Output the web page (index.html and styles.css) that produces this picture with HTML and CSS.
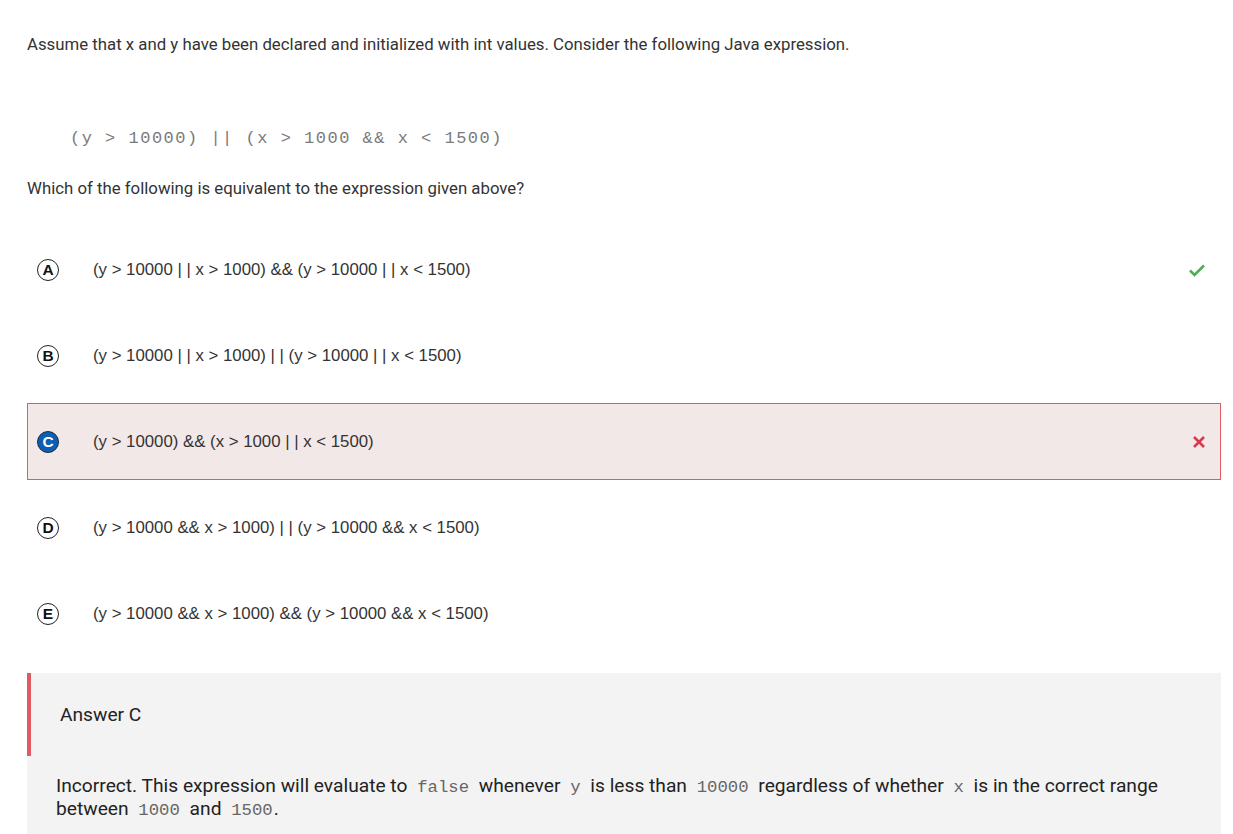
FILE: index.html
```html
<!DOCTYPE html>
<html>
<head>
<meta charset="utf-8">
<link rel="stylesheet" href="styles.css">
</head>
<body>
<div class="page">
  <p class="stem">Assume that x and y have been declared and initialized with int values. Consider the following Java expression.</p>
  <pre class="code">(y &gt; 10000) || (x &gt; 1000 &amp;&amp; x &lt; 1500)</pre>
  <p class="stem question">Which of the following is equivalent to the expression given above?</p>

  <div class="options">
    <div class="option">
      <span class="badge">A</span>
      <span class="opt-text">(y &gt; 10000 | | x &gt; 1000) &amp;&amp; (y &gt; 10000 | | x &lt; 1500)</span>
      <span class="mark">
        <svg width="18" height="14" viewBox="0 0 18 14"><path d="M2 7.5 L6.5 12 L16 2.5" fill="none" stroke="#4caf50" stroke-width="2.6"/></svg>
      </span>
    </div>
    <div class="option">
      <span class="badge">B</span>
      <span class="opt-text">(y &gt; 10000 | | x &gt; 1000) | | (y &gt; 10000 | | x &lt; 1500)</span>
    </div>
    <div class="option selected">
      <span class="badge filled">C</span>
      <span class="opt-text">(y &gt; 10000) &amp;&amp; (x &gt; 1000 | | x &lt; 1500)</span>
      <span class="mark">
        <svg width="14" height="14" viewBox="0 0 14 14"><path d="M2 2 L12 12 M12 2 L2 12" fill="none" stroke="#d9394a" stroke-width="2.6"/></svg>
      </span>
    </div>
    <div class="option">
      <span class="badge">D</span>
      <span class="opt-text">(y &gt; 10000 &amp;&amp; x &gt; 1000) | | (y &gt; 10000 &amp;&amp; x &lt; 1500)</span>
    </div>
    <div class="option">
      <span class="badge">E</span>
      <span class="opt-text">(y &gt; 10000 &amp;&amp; x &gt; 1000) &amp;&amp; (y &gt; 10000 &amp;&amp; x &lt; 1500)</span>
    </div>
  </div>

  <div class="feedback">
    <div class="answer">Answer C</div>
    <div class="explain"><span class="line">Incorrect. This expression will evaluate to <code>false</code> whenever <code>y</code> is less than <code>10000</code> regardless of whether <code>x</code> is in the correct range</span><span class="line">between <code>1000</code> and <code class="end">1500</code>.</span></div>
  </div>
</div>
</body>
</html>
```

FILE: styles.css
```css
html, body {
  margin: 0;
  padding: 0;
  background: #ffffff;
}

.page {
  padding: 32px 12px 0 27px;
  font-family: Roboto, "Liberation Sans", sans-serif;
  color: #333333;
}

.stem {
  margin: 0;
  font-size: 16.8px;
  line-height: 24px;
}

.code {
  margin: 73px 0 0 43px;
  font-family: "Liberation Mono", "Courier New", monospace;
  font-size: 17px;
  letter-spacing: 1.5px;
  line-height: 20px;
  color: #7a7a7a;
}

.question {
  margin-top: 27px;
}

.options {
  margin-top: 31px;
  display: flex;
  flex-direction: column;
  gap: 9px;
}

.option {
  height: 77px;
  box-sizing: border-box;
  display: flex;
  align-items: center;
  padding: 0 14px 0 8px;
  border: 1px solid transparent;
  font-family: "Liberation Sans", Arial, sans-serif;
  font-size: 16.8px;
  color: #333333;
}

.option.selected {
  background: #f3e8e8;
  border-color: #e05a64;
}

.badge {
  width: 22px;
  height: 22px;
  box-sizing: border-box;
  border: 1.6px solid #222;
  border-radius: 50%;
  display: flex;
  align-items: center;
  justify-content: center;
  font-weight: bold;
  font-size: 15.5px;
  color: #111;
  flex: none;
  margin-left: 1px;
}

.badge.filled {
  background: #0b5fb3;
  border-color: #1a2a44;
  color: #ffffff;
}

.opt-text {
  margin-left: 34px;
  flex: 1;
}

.mark {
  display: flex;
  align-items: center;
  margin-right: 0;
}

.feedback {
  margin-top: 21px;
  background: #f3f3f3;
  padding-bottom: 30px;
}

.answer {
  border-left: 4px solid #e05a64;
  padding: 30px 0 29px 29px;
  font-size: 19.2px;
  line-height: 24px;
  color: #222;
}

.explain {
  padding: 18px 40px 0 29px;
  font-size: 19.2px;
  line-height: 23px;
  color: #222;
  display: flex;
  flex-direction: column;
}

.line {
  display: block;
  white-space: nowrap;
}

.explain code {
  font-family: "Liberation Mono", "Courier New", monospace;
  font-size: 17.3px;
  line-height: 1;
  color: #666;
  padding: 0 5px;
}

.explain code.end {
  padding-right: 1px;
}
```
